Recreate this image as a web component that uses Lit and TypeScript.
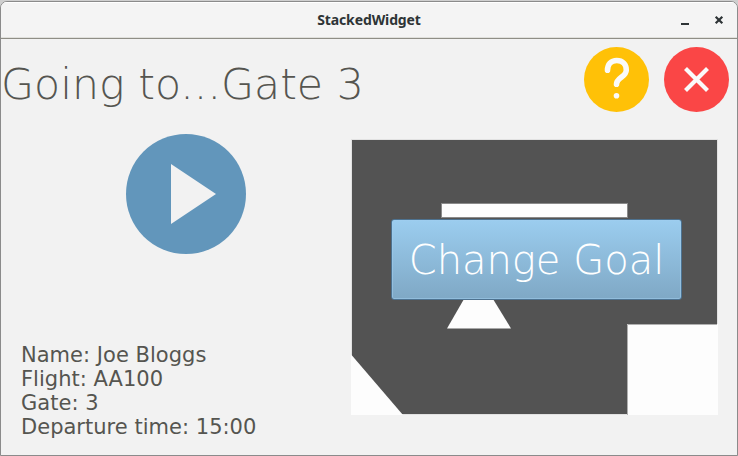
import { LitElement, html, css, svg } from "lit";
import { customElement, property } from "lit/decorators.js";

@customElement("title-bar")
class TitleBar extends LitElement {
  @property() caption = "";

  static styles = css`
    :host {
      display: grid;
      grid-template-columns: 1fr auto 1fr;
      align-items: center;
      box-sizing: border-box;
      height: 37px;
      border-top: 1px solid #fff;
      border-bottom: 1px solid #8f8e86;
      box-shadow: inset 0 -1px 0 #e0e0dc;
      background: #f4f4f4;
    }
    .caption {
      grid-column: 2;
      padding-bottom: 2px;
      font: 700 14px/20px "Noto Sans", "Open Sans", sans-serif;
      letter-spacing: -0.12px;
      color: #2e3436;
    }
    .controls {
      display: flex;
      justify-content: flex-end;
      gap: 18px;
      padding: 0 10px 1px 0;
    }
    svg { display: block; width: 16px; height: 16px; }
  `;

  render() {
    return html`
      <span class="caption">${this.caption}</span>
      <div class="controls">
        <svg viewBox="0 0 16 16"><path d="M4 11h8v2H4z" fill="#2e3436" /></svg>
        <svg viewBox="0 0 16 16"><path d="M4.7 4.7l6.6 6.6M11.3 4.7l-6.6 6.6" stroke="#2e3436" stroke-width="2.2" /></svg>
      </div>
    `;
  }
}

@customElement("floor-map")
class FloorMap extends LitElement {
  static styles = css`
    :host { display: grid; width: 367px; height: 276px; }
    svg, .overlay { grid-area: 1 / 1; }
    svg { display: block; }
    .overlay { display: grid; place-items: start center; padding: 80px 0 0 3px; z-index: 1; }
    .goal {
      box-sizing: border-box;
      width: 291px;
      height: 81px;
      padding: 2px 0 0 1px;
      border: 1px solid #4d7290;
      border-radius: 3px;
      background: linear-gradient(#9bcdef, #7fa8c5);
      box-shadow: inset 0 0 0 1px rgba(160, 205, 238, 0.55);
      color: #fff;
      font: 200 40px/77px "DejaVu Sans", sans-serif;
      white-space: nowrap;
    }
  `;

  render() {
    return html`
      <svg width="367" height="276" viewBox="0 0 367 276">
        <rect width="367" height="276" fill="#e2e2e2" />
        <rect x="1" y="1" width="365" height="274" fill="#535353" />
        ${svg`<g fill="#fdfdfd">
          <rect x="90.5" y="64.5" width="186" height="14" stroke="#8a8a8a" stroke-width="1" />
          <path d="M96 189.5 L113 160 H142 L160 189.5Z" />
          <path d="M0 216 L1 216.5 L52 276 H0Z" />
          <path d="M276 185 H367 V276 H276Z" />
        </g>
        <path d="M276.5 276 V185.5 H366" fill="none" stroke="#b0b0b0" />`}
      </svg>
      <div class="overlay"><button class="goal">Change Goal</button></div>
    `;
  }
}

@customElement("app-root")
class AppRoot extends LitElement {
  @property({ attribute: false }) gate = "3";
  @property({ attribute: false }) details = [
    ["Name", "Joe Bloggs"],
    ["Flight", "AA100"],
    ["Gate", "3"],
    ["Departure time", "15:00"],
  ];

  static styles = css`
    :host { display: block; box-sizing: border-box; width: 738px; height: 456px; padding-top: 1px; background: #cfcfcf; }
    .window {
      box-sizing: border-box;
      height: 455px;
      border: 1px solid #8b8b8b;
      border-radius: 7px 7px 0 0;
      overflow: hidden;
      background: #f2f2f2;
      font-family: "DejaVu Sans", sans-serif;
      color: #555550;
    }
    header { display: flex; align-items: center; height: 80px; margin-bottom: 2px; gap: 15px; padding-right: 8px; }
    h1 { flex: 1; margin: 0; padding: 10px 0 0; font-size: 42.67px; line-height: 50px; font-weight: 200; white-space: nowrap; }
    .round { display: block; width: 65px; height: 65px; }
    main { display: grid; grid-template-columns: 350px 367px; height: 334px; }
    .left { display: flex; flex-direction: column; justify-content: space-between; padding: 13px 0 16px 20px; }
    .play { display: block; width: 120px; height: 120px; margin-left: 105px; }
    .details { font-size: 21px; line-height: 24px; letter-spacing: 0.02px; white-space: nowrap; }
    floor-map { margin-top: 18px; }
  `;

  render() {
    return html`
      <div class="window">
        <title-bar caption="StackedWidget"></title-bar>
        <header>
          <h1>Going to...Gate ${this.gate}</h1>
          <svg class="round" viewBox="0 0 65 65">
            <circle cx="32.5" cy="32.5" r="32.5" fill="#ffc107" />
            <path d="M23.5 23.3C23.5 17.4 27 13.5 32.8 13.5S42.3 17.4 42.3 22.9C42.3 30 32.5 30.5 32.5 37.3" fill="none" stroke="#fafafa" stroke-width="5.6" stroke-linecap="round" />
            <circle cx="32.5" cy="48.8" r="2.8" fill="#fafafa" />
          </svg>
          <svg class="round" viewBox="0 0 65 65">
            <circle cx="32.5" cy="32.5" r="32.5" fill="#fa4646" />
            <path d="M21.5 21.5l22 22M43.5 21.5l-22 22" stroke="#fafafa" stroke-width="4.2" />
          </svg>
        </header>
        <main>
          <div class="left">
            <svg class="play" viewBox="0 0 120 120">
              <circle cx="60" cy="60" r="60" fill="#6296bb" />
              <path d="M45 30L90 60L45 90Z" fill="#f2f2f2" />
            </svg>
            <div class="details">
              ${this.details.map(([k, v]) => html`<div>${k}: ${v}</div>`)}
            </div>
          </div>
          <floor-map></floor-map>
        </main>
      </div>
    `;
  }
}
